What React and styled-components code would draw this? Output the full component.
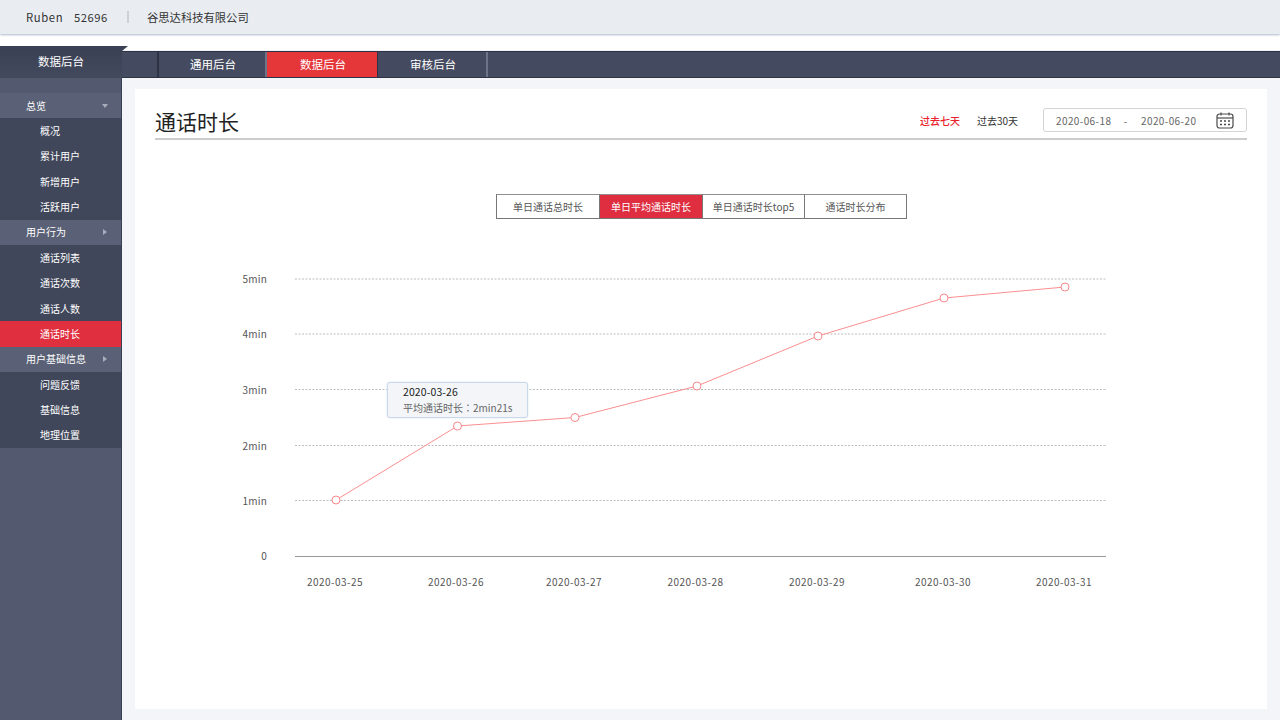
import React from "react";
import styled, { createGlobalStyle } from "styled-components";

const GlobalStyle = createGlobalStyle`
  html, body {
    margin: 0;
    padding: 0;
    height: 100%;
    background: #ffffff;
    font-family: "Noto Sans CJK SC", "Noto Sans", sans-serif;
    overflow: hidden;
  }
  * {
    box-sizing: border-box;
  }
`;

const sideMenu = [
  { label: "总览", group: true, open: true },
  { label: "概况" },
  { label: "累计用户" },
  { label: "新增用户" },
  { label: "活跃用户" },
  { label: "用户行为", group: true },
  { label: "通话列表" },
  { label: "通话次数" },
  { label: "通话人数" },
  { label: "通话时长", active: true },
  { label: "用户基础信息", group: true },
  { label: "问题反馈" },
  { label: "基础信息" },
  { label: "地理位置" },
];

const chartTabs = [
  { label: "单日通话总时长", width: 103 },
  { label: "单日平均通话时长", width: 103, active: true },
  { label: "单日通话时长top5", width: 102 },
  { label: "通话时长分布", width: 103 },
];

const yTicks = [
  { label: "5min", y: 279 },
  { label: "4min", y: 334 },
  { label: "3min", y: 389.5 },
  { label: "2min", y: 445.5 },
  { label: "1min", y: 500.5 },
];

const points = [
  { x: 336, y: 500, label: "2020-03-25", labelX: 335 },
  { x: 457.5, y: 426, label: "2020-03-26", labelX: 456 },
  { x: 575, y: 417.5, label: "2020-03-27", labelX: 574 },
  { x: 697, y: 386, label: "2020-03-28", labelX: 695.5 },
  { x: 818, y: 336, label: "2020-03-29", labelX: 817 },
  { x: 944, y: 298, label: "2020-03-30", labelX: 943 },
  { x: 1065, y: 287, label: "2020-03-31", labelX: 1064 },
];

// chart svg starts at the card's left edge, y 220 on the page
const CHART_X = 135;
const CHART_Y = 220;

const CalendarIcon = () => (
  <svg width="18" height="17" viewBox="0 0 18 17" fill="none">
    <rect x="1" y="2" width="16" height="14" rx="2.5" stroke="#4a4a4a" strokeWidth="1.2" />
    <path d="M1 6h16" stroke="#4a4a4a" strokeWidth="1.2" />
    <path d="M5 0.5v3M13 0.5v3" stroke="#4a4a4a" strokeWidth="1.2" />
    <path
      d="M4 9h2M8 9h2M12 9h2M4 12.5h2M8 12.5h2M12 12.5h2"
      stroke="#4a4a4a"
      strokeWidth="1.4"
    />
  </svg>
);

const Chart = () => (
  <ChartSvg width="1132" height="380" viewBox="0 0 1132 380">
    <g transform={`translate(${-CHART_X} ${-CHART_Y})`}>
      {yTicks.map((t) => (
        <g key={t.label}>
          <line x1="295" x2="1106" y1={t.y} y2={t.y} stroke="#bdbdbd" strokeWidth="1" strokeDasharray="2 1.5" />
          <TickText x="267" y={t.y + 4} textAnchor="end">
            {t.label}
          </TickText>
        </g>
      ))}
      <line x1="295" x2="1106" y1="556.5" y2="556.5" stroke="#999999" strokeWidth="1" />
      <TickText x="267" y="560" textAnchor="end">
        0
      </TickText>
      <polyline
        points={points.map((p) => `${p.x},${p.y}`).join(" ")}
        fill="none"
        stroke="#fb8f90"
        strokeWidth="1"
      />
      {points.map((p) => (
        <g key={p.label}>
          <circle cx={p.x} cy={p.y} r="4" fill="#ffffff" stroke="#f8888b" strokeWidth="1" />
          <AxisText x={p.labelX} y="586" textAnchor="middle">
            {p.label}
          </AxisText>
        </g>
      ))}
    </g>
  </ChartSvg>
);

const App = () => {
  return (
    <Page>
      <GlobalStyle />
      <TopBar>
        <UserName>Ruben</UserName>
        <UserId>52696</UserId>
        <TopDivider />
        <Company>谷思达科技有限公司</Company>
      </TopBar>
      <Body>
        <Sidebar>
          <SideTitle>数据后台</SideTitle>
          <SideMenu>
            {sideMenu.map((item) =>
              item.group ? (
                <GroupRow key={item.label}>
                  {item.label}
                  <Caret $open={item.open} />
                </GroupRow>
              ) : (
                <MenuRow key={item.label} $active={item.active}>
                  {item.label}
                </MenuRow>
              )
            )}
          </SideMenu>
        </Sidebar>
        <Main>
          <NavBar>
            <NavTab $width={110}>通用后台</NavTab>
            <NavTab $width={111} $active>
              数据后台
            </NavTab>
            <NavTab $width={110}>审核后台</NavTab>
          </NavBar>
          <Content>
            <Card>
              <CardHeader>
                <Title>通话时长</Title>
                <RangeLink $active>过去七天</RangeLink>
                <RangeLink>过去30天</RangeLink>
                <DateBox>
                  <DateText>2020-06-18</DateText>
                  <DateDash>-</DateDash>
                  <DateText>2020-06-20</DateText>
                  <CalendarSlot>
                    <CalendarIcon />
                  </CalendarSlot>
                </DateBox>
              </CardHeader>
              <Tabs>
                {chartTabs.map((t) => (
                  <ChartTab key={t.label} $width={t.width} $active={t.active}>
                    {t.label}
                  </ChartTab>
                ))}
              </Tabs>
              <ChartWrap>
                <Chart />
                <Tooltip>
                  <TooltipDate>2020-03-26</TooltipDate>
                  <TooltipValue>
                    平均通话时长<TooltipColon>：</TooltipColon>2min21s
                  </TooltipValue>
                </Tooltip>
              </ChartWrap>
            </Card>
          </Content>
        </Main>
      </Body>
    </Page>
  );
};

export default App;

const Page = styled.div`
  width: 1280px;
  height: 720px;
  display: flex;
  flex-direction: column;
  background: #ffffff;
`;

const TopBar = styled.header`
  height: 34px;
  flex: none;
  display: flex;
  align-items: center;
  padding-left: 26px;
  background: #e9edf2;
  box-shadow: 0 1px 2px #aeb9ca;
  color: #333333;
  font-size: 11.3px;
`;

const UserName = styled.span`
  width: 48px;
  letter-spacing: 0.6px;
`;

const UserId = styled.span`
  width: 53px;
  letter-spacing: 0.5px;
`;

const TopDivider = styled.span`
  width: 2px;
  height: 12px;
  background: #ced1d6;
  margin-right: 18px;
`;

const Company = styled.span`
  color: #333333;
`;

const Body = styled.div`
  flex: 1;
  min-height: 0;
  margin-top: 12px;
  display: flex;
`;

const Sidebar = styled.aside`
  width: 122px;
  flex: none;
  display: flex;
  flex-direction: column;
  background: #53596e;
  border-right: 1px solid #3a4052;
`;

const SideTitle = styled.div`
  position: relative;
  height: 32px;
  width: 122px;
  flex: none;
  display: flex;
  align-items: center;
  justify-content: center;
  padding-bottom: 2px;
  background: linear-gradient(#3a4054, #434a5e);
  color: #ffffff;
  font-size: 11.5px;

  &::after {
    content: "";
    position: absolute;
    left: 122px;
    top: 0;
    border-top: 5px solid #3a4054;
    border-right: 6px solid transparent;
  }
`;

const SideMenu = styled.nav`
  margin-top: 15px;
  width: 121px;
  display: grid;
  grid-auto-rows: 25.36px;
`;

const GroupRow = styled.div`
  position: relative;
  display: flex;
  align-items: center;
  padding: 0 0 1px 26px;
  background: #5a6176;
  color: #ffffff;
  font-size: 10px;
`;

const Caret = styled.span`
  position: absolute;
  right: ${(p) => (p.$open ? "13px" : "14px")};
  top: 50%;
  transform: translateY(-50%);
  width: 0;
  height: 0;
  ${(p) =>
    p.$open
      ? `border-top: 4.5px solid #a7adba;
         border-left: 3.5px solid transparent;
         border-right: 3.5px solid transparent;`
      : `border-left: 4.5px solid #a7adba;
         border-top: 3.5px solid transparent;
         border-bottom: 3.5px solid transparent;`}
`;

const MenuRow = styled.div`
  display: flex;
  align-items: center;
  padding: 0 0 1px 40px;
  background: ${(p) => (p.$active ? "#e0303f" : "#41475b")};
  color: #ffffff;
  font-size: 10px;
`;

const Main = styled.main`
  flex: 1;
  min-width: 0;
  display: flex;
  flex-direction: column;
`;

const NavBar = styled.div`
  height: 27px;
  margin-top: 5px;
  flex: none;
  display: flex;
  padding-left: 35px;
  background: #444a5f;
  border-top: 1px solid #2d3244;
  border-bottom: 1px solid #2d3244;
  box-shadow: 0 -1px 0 #eff1f4;
`;

const NavTab = styled.div`
  width: ${(p) => p.$width}px;
  display: flex;
  align-items: center;
  justify-content: center;
  padding: 0 0 1px 2px;
  background: ${(p) => (p.$active ? "#e5363a" : "transparent")};
  border-right: ${(p) => (p.$active ? "1px solid #2d3244" : "2px solid #6d7488")};
  color: #ffffff;
  font-size: 11.5px;

  &:first-child {
    border-left: 2px solid #2d3244;
  }
`;

const Content = styled.div`
  flex: 1;
  min-height: 0;
  padding: 11px 13px 11px 13px;
  background: #f3f5f8;
`;

const Card = styled.section`
  height: 620px;
  padding-top: 20px;
  background: #ffffff;
`;

const CardHeader = styled.div`
  height: 31px;
  margin: 0 20px;
  padding-bottom: 7px;
  display: flex;
  align-items: center;
  border-bottom: 2px solid #cccccc;
`;

const Title = styled.h1`
  flex: 1;
  margin: 2px 0 0;
  font-size: 21px;
  font-weight: 400;
  line-height: 26px;
  color: #222222;
`;

const RangeLink = styled.span`
  margin-right: ${(p) => (p.$active ? "17px" : "25px")};
  color: ${(p) => (p.$active ? "#e8202a" : "#333333")};
  font-size: 10px;
  font-weight: ${(p) => (p.$active ? 500 : 400)};
`;

const DateBox = styled.div`
  width: 204px;
  height: 24px;
  display: flex;
  align-items: center;
  padding-left: 12px;
  border: 1px solid #d4d4d4;
  border-radius: 3px;
  color: #666666;
  font-size: 10px;
`;

const DateText = styled.span`
  width: 54px;
  letter-spacing: 0.4px;
  white-space: nowrap;
`;

const DateDash = styled.span`
  width: 31px;
  text-align: center;
`;

const CalendarSlot = styled.span`
  margin-left: auto;
  margin-right: 12px;
  display: flex;
`;

const Tabs = styled.div`
  margin: 54px 0 0 361px;
  display: flex;
  height: 25px;
  width: fit-content;
`;

const ChartTab = styled.div`
  width: ${(p) => p.$width}px;
  display: flex;
  align-items: center;
  justify-content: center;
  padding-bottom: 1px;
  background: ${(p) => (p.$active ? "#de2e3f" : "#ffffff")};
  border-top: 1px solid #8f8f8f;
  border-bottom: 1px solid #777777;
  border-left: 1px solid #777777;
  color: ${(p) => (p.$active ? "#ffffff" : "#555555")};
  font-size: 10px;

  &:last-child {
    border-right: 1px solid #777777;
  }
`;

const ChartWrap = styled.div`
  position: relative;
  margin-top: 1px;
  height: 380px;
`;

const ChartSvg = styled.svg`
  display: block;
`;

const AxisText = styled.text`
  font-family: "Noto Sans CJK SC", "Noto Sans", sans-serif;
  font-size: 10px;
  letter-spacing: 0.45px;
  fill: #555555;
`;

const TickText = styled(AxisText)`
  letter-spacing: 0.2px;
`;

const Tooltip = styled.div`
  position: absolute;
  left: 252px;
  top: 162px;
  width: 141px;
  height: 36px;
  padding: 1px 0 0 15px;
  background: #f3f5f8;
  border: 1px solid #c9d9ea;
  border-radius: 3px;
  box-shadow: 0 0 2px #d5e0ec;
`;

const TooltipDate = styled.div`
  font-size: 10.5px;
  line-height: 16px;
  color: #222222;
  letter-spacing: 0.1px;
`;

const TooltipValue = styled.div`
  font-size: 10px;
  line-height: 16px;
  color: #666666;
  white-space: nowrap;
`;

const TooltipColon = styled.span`
  font-family: "Noto Sans CJK TC", sans-serif;
`;
